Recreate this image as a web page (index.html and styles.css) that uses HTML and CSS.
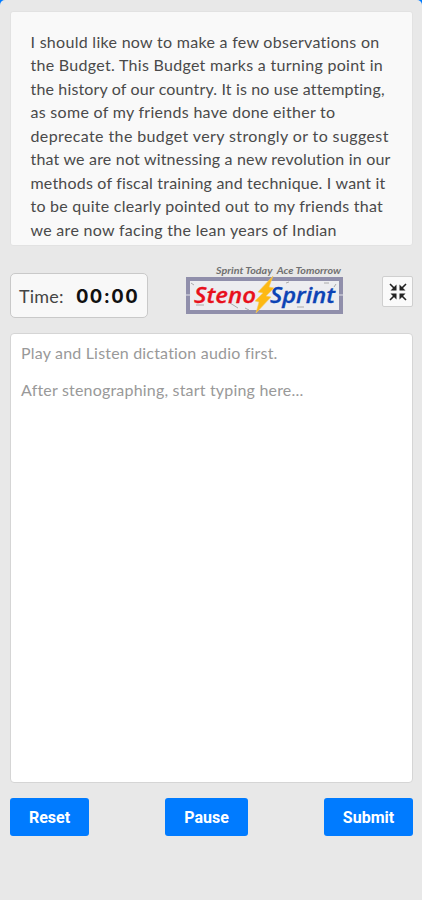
FILE: index.html
```html
<!DOCTYPE html>
<html lang="en">
<head>
    <meta charset="UTF-8">
    <meta name="viewport" content="width=device-width, initial-scale=1.0">
    <title>Steno Sprint</title>
    <link rel="stylesheet" href="styles.css">
</head>
<body>

<div class="app">
    <div class="passage">
        <p class="line">I should like now to make a few observations on</p>
        <p class="line">the Budget. This Budget marks a turning point in</p>
        <p class="line tight">the history of our country. It is no use attempting,</p>
        <p class="line">as some of my friends have done either to</p>
        <p class="line wide">deprecate the budget very strongly or to suggest</p>
        <p class="line snug">that we are not witnessing a new revolution in our</p>
        <p class="line snug">methods of fiscal training and technique. I want it</p>
        <p class="line near">to be quite clearly pointed out to my friends that</p>
        <p class="line">we are now facing the lean years of Indian</p>
    </div>

    <div class="toolbar">
        <div class="timer">
            <span class="timer-label">Time:</span>
            <span class="timer-value">00:00</span>
        </div>

        <svg class="logo" width="160" height="54" viewBox="0 0 160 54">
            <text class="tagline" x="31" y="10" textLength="125" lengthAdjust="spacingAndGlyphs">Sprint Today&#160; Ace Tomorrow</text>
            <rect x="3" y="15" width="153" height="33" fill="#ededf0" stroke="#908fab" stroke-width="4"/>
            <path d="M0 31h6M153 31h6" stroke="#e4e4ea" stroke-width="1"/>
            <path d="M6 19l3 2M11 41h8M45 39l8 5M60 44l4 2M101 19l3-1M112 43h7M139 19h5M149 23l2-3" stroke="#aaa" stroke-width="1"/>
            <text class="brand steno" x="9" y="39" textLength="62" lengthAdjust="spacingAndGlyphs">Steno</text>
            <text class="brand sprint" x="85" y="39" textLength="65" lengthAdjust="spacingAndGlyphs">Sprint</text>
            <path d="M88 12L73 28l5 1-8 8 4 1-3 11 15-16-5-1 8-8-5-1z" fill="#fdb913" stroke="#f5ca62" stroke-width=".6"/>
        </svg>

        <button class="shrink" aria-label="Exit full screen">
            <svg width="18" height="18" viewBox="0 0 18 18">
                <path d="M1 1l5 5M17 1l-5 5M1 17l5-5M17 17l-5-5" stroke="#222" stroke-width="1.600"/>
                <path d="M7.500 1.500v6h-6zM10.500 1.500v6h6zM1.500 10.500h6v6zM16.500 10.500h-6v6z" fill="#222"/>
            </svg>
        </button>
    </div>

    <div class="editor">
        <p class="hint">Play and Listen dictation audio first.</p>
        <p class="hint">After stenographing, start typing here...</p>
    </div>

    <div class="actions">
        <button class="btn reset">Reset</button>
        <button class="btn pause">Pause</button>
        <button class="btn submit">Submit</button>
    </div>
</div>

</body>
</html>
```
FILE: styles.css
```css
* {
    box-sizing: border-box;
}

body {
    margin: 0;
    background-color: #007bff;
    font-family: 'Lato', sans-serif;
}

p {
    margin: 0;
}

button {
    padding: 0;
}

.app {
    height: 900px;
    padding: 11px 9px 0 10px;
    background-color: #e8e8e8;
    border-radius: 5px 5px 0 0;
}

.passage {
    height: 235px;
    padding: 17.5px 19.5px 0;
    background-color: #f9f9f9;
    border: 1px solid #e2e2e2;
    border-radius: 3px;
    overflow: hidden;
}

.line {
    width: max-content;
    font-size: 16px;
    line-height: 23.5px;
    white-space: nowrap;
    color: #4a4a4a;
    letter-spacing: 0.29px;
}

.tight {
    letter-spacing: 0.15px;
}

.snug {
    letter-spacing: 0.19px;
}

.near {
    letter-spacing: 0.25px;
}

.wide {
    letter-spacing: 0.39px;
}

.toolbar {
    display: flex;
    justify-content: space-between;
    height: 87px;
    padding-top: 18px;
}

.timer {
    display: flex;
    align-items: center;
    width: 138px;
    height: 45px;
    margin-top: 9px;
    padding-left: 8px;
    background-color: #f8f8f8;
    border: 1px solid #c9c9c9;
    border-radius: 5px;
}

.timer-label {
    width: 57px;
    font-size: 18px;
    color: #444;
    letter-spacing: 0.2px;
}

.timer-value {
    font-family: 'Inter', sans-serif;
    font-size: 18.5px;
    font-weight: 700;
    letter-spacing: 1.4px;
    color: #111;
}

.logo {
    display: block;
}

.tagline {
    font: italic 700 9px 'Lato', sans-serif;
    fill: #707070;
}

.brand {
    font: italic 600 22px 'Open Sans', sans-serif;
}

.steno {
    fill: #e8101c;
    stroke: #e8101c;
    stroke-width: 0.3px;
}

.sprint {
    fill: #0c43b5;
    stroke: #0c43b5;
    stroke-width: 0.3px;
}

.shrink {
    display: flex;
    align-items: center;
    justify-content: center;
    width: 31px;
    height: 31px;
    margin-top: 12px;
    background-color: #fafafa;
    border: 1px solid #cfcfcf;
    border-radius: 2px;
}

.editor {
    height: 450px;
    padding: 9px 10px;
    background-color: #fff;
    border: 1px solid #d5d5d5;
    border-radius: 4px;
}

.hint {
    width: max-content;
    font-size: 16px;
    line-height: 20px;
    color: #999;
    letter-spacing: 0.19px;
}

.hint + .hint {
    margin-top: 17px;
}

.actions {
    display: flex;
    justify-content: space-between;
    margin-top: 15px;
}

.btn {
    height: 38px;
    background-color: #007bff;
    border: 0;
    border-radius: 3px;
    color: #fff;
    font: 700 16px 'Roboto', sans-serif;
}

.reset {
    width: 79px;
}

.pause {
    width: 83px;
}

.submit {
    width: 89px;
}
```
